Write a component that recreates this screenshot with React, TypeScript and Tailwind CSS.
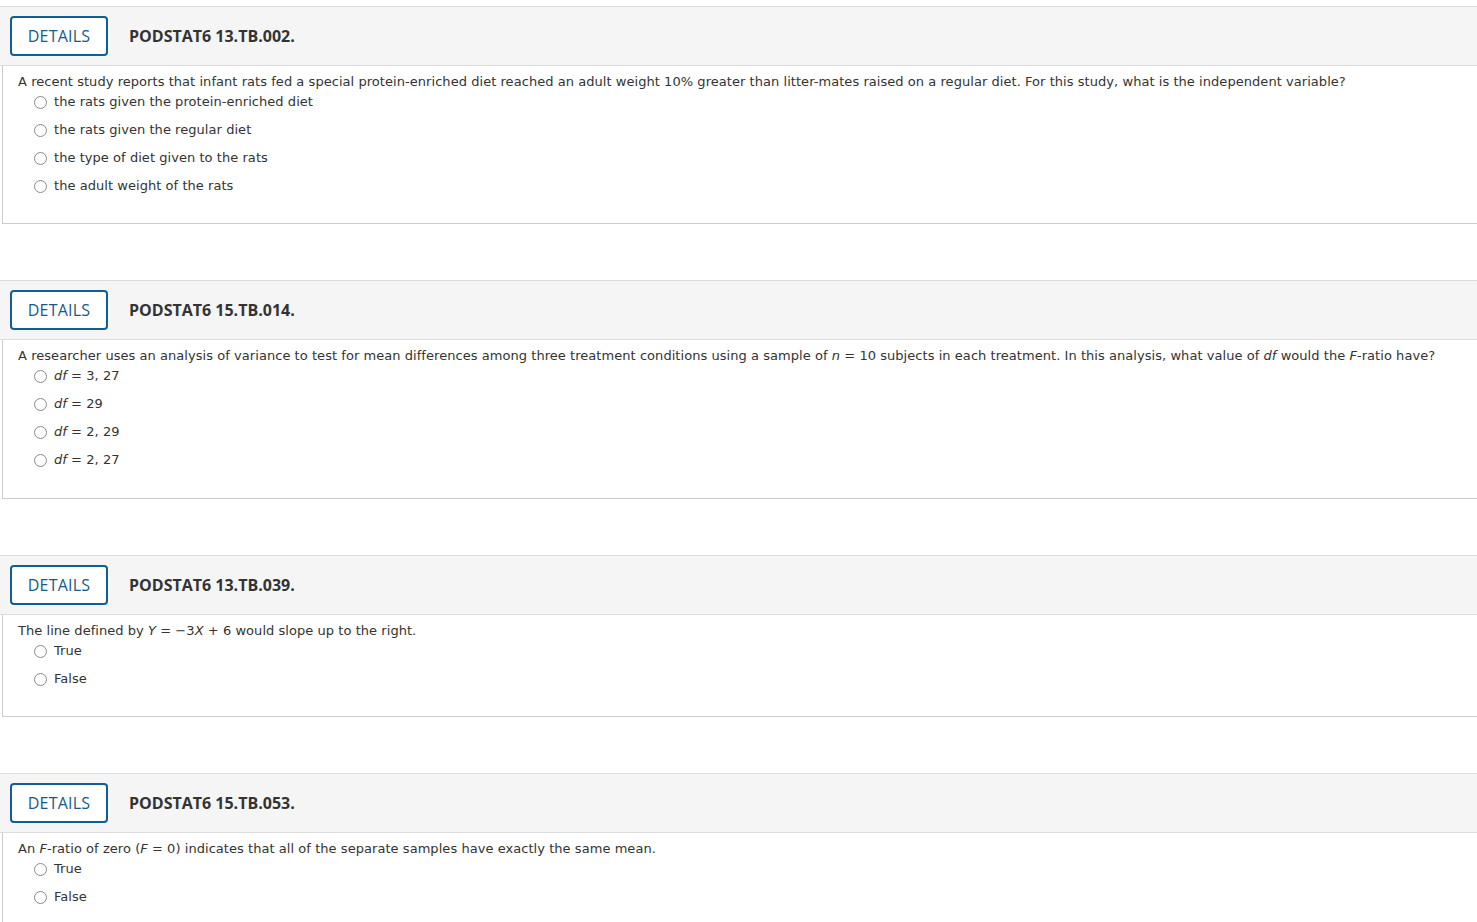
import React from "react";

type Question = {
    code: string;
    prompt: React.ReactNode;
    options: React.ReactNode[];
    tall?: boolean;
};

const questions: Question[] = [
    {
        code: "PODSTAT6 13.TB.002.",
        prompt: "A recent study reports that infant rats fed a special protein-enriched diet reached an adult weight 10% greater than litter-mates raised on a regular diet. For this study, what is the independent variable?",
        options: [
            "the rats given the protein-enriched diet",
            "the rats given the regular diet",
            "the type of diet given to the rats",
            "the adult weight of the rats",
        ],
    },
    {
        code: "PODSTAT6 15.TB.014.",
        prompt: (
            <>
                A researcher uses an analysis of variance to test for mean differences among three treatment conditions using a sample of <i>n</i> = 10 subjects in each treatment. In this analysis, what value of <i>df</i> would the <i>F</i>-ratio have?
            </>
        ),
        options: [
            <><i>df</i> = 3, 27</>,
            <><i>df</i> = 29</>,
            <><i>df</i> = 2, 29</>,
            <><i>df</i> = 2, 27</>,
        ],
        tall: true,
    },
    {
        code: "PODSTAT6 13.TB.039.",
        prompt: (
            <>
                The line defined by <i>Y</i> = −3<i>X</i> + 6 would slope up to the right.
            </>
        ),
        options: ["True", "False"],
    },
    {
        code: "PODSTAT6 15.TB.053.",
        prompt: (
            <>
                An <i>F</i>-ratio of zero (<i>F</i> = 0) indicates that all of the separate samples have exactly the same mean.
            </>
        ),
        options: ["True", "False"],
    },
];

function QuestionBlock({ q }: { q: Question }) {
    return (
        <div className="mb-[56px]">
            {/* header strip */}
            <div className="flex items-center h-[60px] bg-[#f5f5f5] border-y border-[#dddddd]">
                <button className="ml-[10px] w-[98px] h-[40px] border-2 border-[#0f5f96] rounded-[4px] bg-white text-[#155a8a] text-[16px] font-['Open_Sans',sans-serif] tracking-[0.2px]">
                    DETAILS
                </button>
                <span className="ml-[21px] text-[16px] font-bold text-[#333] font-['Open_Sans',sans-serif]">
                    {q.code}
                </span>
            </div>

            {/* body */}
            <div
                className={
                    q.tall
                        ? "ml-[2px] border-l border-b border-[#cccccc] pl-[15px] pt-[6px] pb-[20px] text-[13px] leading-[20px] tracking-[0.05px] text-[#333] font-['DejaVu_Sans',Verdana,sans-serif]"
                        : "ml-[2px] border-l border-b border-[#cccccc] pl-[15px] pt-[6px] pb-[19px] text-[13px] leading-[20px] tracking-[0.05px] text-[#333] font-['DejaVu_Sans',Verdana,sans-serif]"
                }
            >
                <p>{q.prompt}</p>
                {q.options.map((opt, i) => (
                    <label key={i} className="flex items-center mb-[8px] ml-[16px]">
                        <span className="w-[13px] h-[13px] rounded-full border border-[#8a8a8a] bg-white shrink-0" />
                        <span className="ml-[7px]">{opt}</span>
                    </label>
                ))}
            </div>
        </div>
    );
}

export default function App() {
    return (
        <div className="min-h-screen bg-white pt-[6px] overflow-hidden">
            {questions.map((q) => (
                <QuestionBlock key={q.code} q={q} />
            ))}
        </div>
    );
}
